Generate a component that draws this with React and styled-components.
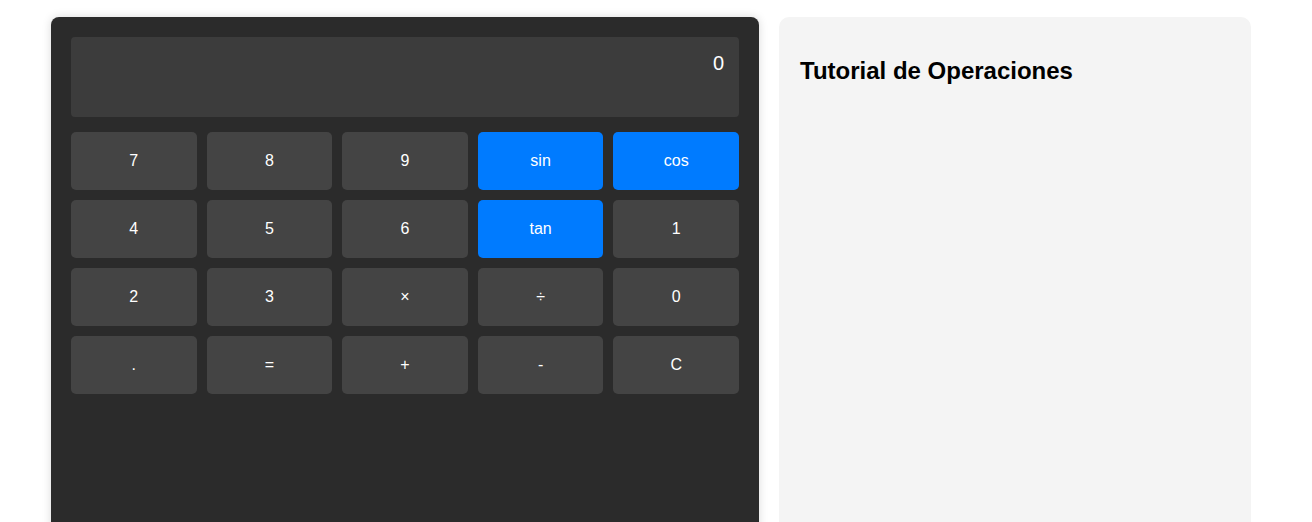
import React from 'react'
import styled, {createGlobalStyle} from 'styled-components'

const GlobalStyle = createGlobalStyle`
    *{
        box-sizing: border-box;
    }
    body{
        margin: 0;
        background: #ffffff;
        font-family: "Liberation Sans", Arial, sans-serif;
    }
`

const keys = [
    ['7'], ['8'], ['9'], ['sin', true], ['cos', true],
    ['4'], ['5'], ['6'], ['tan', true], ['1'],
    ['2'], ['3'], ['×'], ['÷'], ['0'],
    ['.'], ['='], ['+'], ['-'], ['C'],
]

const App = () => {
    return (
        <Page>
            <GlobalStyle />
            <Calculator>
                <Display>0</Display>
                <Keys>
                    {keys.map(([label, fn], i) => (
                        <Key key={i} $fn={fn}>{label}</Key>
                    ))}
                </Keys>
            </Calculator>
            <Tutorial>
                <h2>Tutorial de Operaciones</h2>
            </Tutorial>
        </Page>
    )
}

const Page = styled.div`
    display: flex;
    gap: 20px;
    padding: 17px 0 0 51px;
    align-items: flex-start;
`

const Calculator = styled.div`
    flex: 0 0 708px;
    min-height: 560px;
    background: #2b2b2b;
    border-radius: 8px;
    padding: 20px;
    box-shadow: 0 0 10px rgba(0, 0, 0, 0.15);
`

const Display = styled.div`
    height: 80px;
    background: #3c3c3c;
    border-radius: 4px;
    padding: 15px;
    margin-bottom: 15px;
    color: #ffffff;
    font-size: 20px;
    text-align: right;
`

const Keys = styled.div`
    display: grid;
    grid-template-columns: repeat(5, 1fr);
    gap: 10px;
`

const Key = styled.button`
    height: 58px;
    border: none;
    border-radius: 5px;
    background: ${p => p.$fn ? '#007bff' : '#444444'};
    color: #ffffff;
    font-family: "Liberation Sans", Arial, sans-serif;
    font-size: 16px;
    cursor: pointer;
`

const Tutorial = styled.div`
    flex: 0 0 472px;
    min-height: 560px;
    background: #f4f4f4;
    border-radius: 10px;
    padding: 20px 21px;

    h2{
        margin: 0.83em 0;
        font-size: 24px;
        color: #000000;
    }
`

export default App
